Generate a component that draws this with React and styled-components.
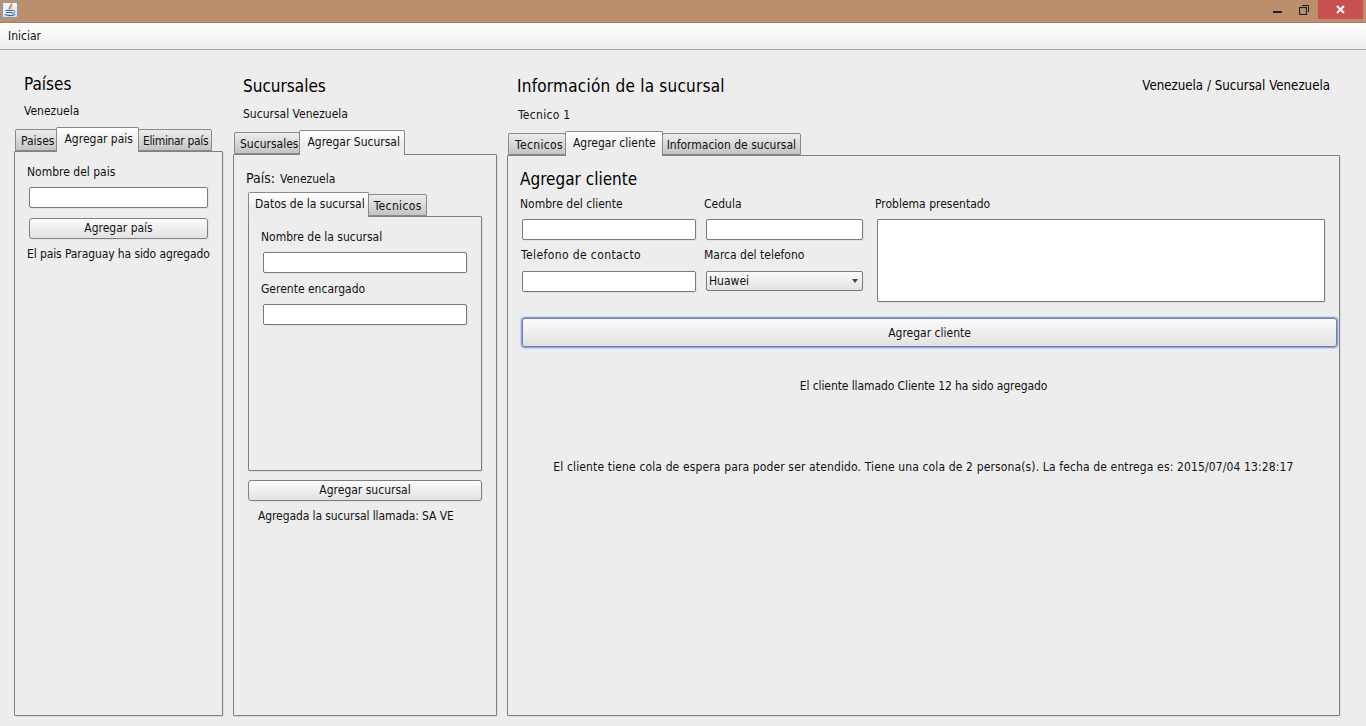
import React from 'react';
import styled, {createGlobalStyle} from 'styled-components';

const Global = createGlobalStyle`
html, body { margin:0; height:100%; background:#ededed; }
body { font-family:"DejaVu Sans Condensed","Noto Sans",sans-serif; font-size:12px; color:#111; }
#root { height:100%; }
* { box-sizing:border-box; }
`

const Frame = styled.div`
width:1366px;
height:726px;
display:flex;
flex-direction:column;
overflow:hidden;
background:#ededed;
`

const TitleBar = styled.div`
height:23px;
flex:none;
display:flex;
align-items:flex-start;
justify-content:space-between;
background:#bb8f6e;
border-bottom:1px solid #a37c60;
padding-left:2px;
`

const AppIcon = styled.div`
width:16px;
height:16px;
margin-top:2px;
border:1px solid #7f9fc4;
border-radius:2px;
background:linear-gradient(#f8fafc,#d3deea);
display:flex;
`

const WinButtons = styled.div`
display:flex;
align-items:flex-start;
margin-right:3px;
`

const WinButton = styled.div`
width:${p => p.$w}px;
height:19px;
display:flex;
align-items:center;
justify-content:center;
background:${p => p.$close ? '#c75050' : 'transparent'};
`

const MinIcon = styled.svg`
margin-top:5px;
`

const MenuBar = styled.div`
height:27px;
flex:none;
display:flex;
align-items:center;
padding:0 0 1px 8px;
background:linear-gradient(#ffffff,#eeeeee);
border-bottom:1px solid #a8a8a8;
`

const Main = styled.div`
flex:1;
display:flex;
gap:10px;
padding:0 0 10px 14px;
min-height:0;
`

const Column = styled.section`
width:${p => p.$w}px;
flex:none;
display:flex;
flex-direction:column;
padding-top:${p => p.$top}px;
`

const HeadRow = styled.div`
display:flex;
justify-content:space-between;
align-items:center;
padding:0 10px;
`

const Heading = styled.h2`
margin:0;
font-size:17px;
font-weight:400;
line-height:20px;
letter-spacing:${p => p.$track || 0}px;
color:#000;
`

const Location = styled.div`
font-size:13.2px;
line-height:20px;
color:#000;
`

const Sub = styled.div`
line-height:16px;
margin-top:${p => p.$gap}px;
padding-left:${p => p.$left}px;
letter-spacing:${p => p.$track || 0}px;
`

const TabStrip = styled.div`
display:flex;
align-items:flex-end;
height:24px;
margin-top:${p => p.$gap || 0}px;
padding-left:1px;
position:relative;
z-index:1;
`

const Tab = styled.div`
height:${p => p.$active ? 25 : 22}px;
line-height:${p => p.$active ? 23 : 22}px;
padding:0 ${p => p.$r}px 0 ${p => p.$l}px;
letter-spacing:${p => p.$track || 0}px;
margin:0 ${p => p.$active ? -1 : 0}px ${p => p.$active ? -1 : 0}px;
border:1px solid #8a8a8a;
border-bottom:${p => p.$active ? 'none' : '1px solid #8a8a8a'};
border-radius:2px 2px 0 0;
white-space:nowrap;
background:${p => p.$active ? 'linear-gradient(#ffffff,#ededed 60%)' : 'linear-gradient(#ededed,#c4c4c4)'};
position:relative;
z-index:${p => p.$active ? 2 : 1};
`

const Panel = styled.div`
flex:${p => p.$h ? 'none' : 1};
height:${p => p.$h ? `${p.$h}px` : 'auto'};
display:flex;
flex-direction:column;
padding:${p => p.$pad};
border:1px solid #808080;
border-radius:1px;
box-shadow:1px 1px 0 #dcdcdc;
`

const Label = styled.label`
display:block;
line-height:16px;
margin-top:${p => p.$gap || 0}px;
`

const Input = styled.input`
display:block;
width:${p => p.$w}px;
height:21px;
margin-top:${p => p.$gap || 0}px;
margin-left:${p => p.$left || 0}px;
background:#fff;
border:1px solid #7a7a7a;
border-radius:2px;
outline:none;
box-shadow:1px 1px 0 #e2e2e2;
`

const Button = styled.button`
display:block;
width:${p => p.$w}px;
height:${p => p.$h || 21}px;
margin-top:${p => p.$gap || 0}px;
margin-left:${p => p.$left || 0}px;
padding:0 0 ${p => p.$focus ? 0 : 1}px;
font:inherit;
color:#111;
background:linear-gradient(#fbfbfb,#e2e2e2);
border:1px solid ${p => p.$focus ? '#7b7f88' : '#808080'};
border-radius:3px;
box-shadow:${p => p.$focus ? '0 0 0 1px #7ea6f0, 0 0 0 2px rgba(150,185,245,.45)' : '1px 1px 0 #e2e2e2'};
`

const Message = styled.div`
line-height:16px;
white-space:nowrap;
margin-top:${p => p.$gap}px;
padding-left:${p => p.$left || 0}px;
letter-spacing:-0.1px;
`

const CenterMessage = styled.div`
line-height:16px;
margin-top:${p => p.$gap}px;
text-align:center;
letter-spacing:${p => p.$track}px;
`

const PaisRow = styled.div`
display:flex;
align-items:baseline;
gap:5px;
line-height:18px;
margin-left:-2px;
`

const PaisLabel = styled.span`
font-size:14px;
`

const SubTitle = styled.h3`
margin:0;
font-size:17px;
font-weight:400;
line-height:20px;
color:#000;
`

const FormGrid = styled.div`
display:grid;
grid-template-columns:184px 171px 1fr;
grid-template-rows:23px 28px 24px 21px;
margin-top:7px;
`

const FieldLabel = styled.label`
line-height:16px;
padding-left:${p => p.$left || 0}px;
letter-spacing:${p => p.$track || 0}px;
`

const FieldBox = styled.div`
padding-left:2px;
`

const Problem = styled.textarea`
grid-column:3;
grid-row:2 / span 3;
width:448px;
height:83px;
margin:0 0 0 2px;
background:#fff;
border:1px solid #7a7a7a;
border-radius:1px;
outline:none;
resize:none;
box-shadow:1px 1px 0 #e2e2e2;
`

const Select = styled.div`
width:157px;
height:20px;
display:flex;
align-items:center;
justify-content:space-between;
padding:0 4px 0 2px;
background:linear-gradient(#fbfbfb,#e2e2e2);
border:1px solid #7a7a7a;
border-radius:2px;
`

const Caret = styled.span`
width:0;
height:0;
border-left:3.5px solid transparent;
border-right:3.5px solid transparent;
border-top:4px solid #444;
`

const JavaIcon = () => (
  <svg width="14" height="14" viewBox="0 0 14 14" fill="none">
    <path d="M8.5 0.5 C9.5 2.5 5.5 3.5 6.5 6.5" stroke="#e8701f" strokeWidth="1.6"/>
    <path d="M10 3 C8.5 4 8.5 5 9 6.5" stroke="#ef9a55" strokeWidth="1"/>
    <path d="M2.5 7.5 H9.5 M3 9.5 H9 M2 11.5 C5 12.8 9 12.8 12 11.5" stroke="#2f6597" strokeWidth="1.1"/>
    <path d="M9.5 7.5 C12.5 7 12.5 10 9 10.2" stroke="#2f6597" strokeWidth="0.9"/>
  </svg>
)

const App = () => (
  <Frame>
    <Global/>
    <TitleBar>
      <AppIcon><JavaIcon/></AppIcon>
      <WinButtons>
        <WinButton $w={25}>
          <MinIcon width="9" height="2" viewBox="0 0 9 2"><rect width="9" height="2" fill="#222"/></MinIcon>
        </WinButton>
        <WinButton $w={28}>
          <svg width="11" height="11" viewBox="0 0 11 11" fill="none" stroke="#222">
            <rect x="0.5" y="3.5" width="7" height="7" strokeWidth="1.2"/>
            <path d="M3 1.5 H9.5 V8" strokeWidth="1"/>
          </svg>
        </WinButton>
        <WinButton $w={45} $close>
          <svg width="9" height="9" viewBox="0 0 9 9" stroke="#fff" strokeWidth="2"><path d="M1 1 L8 8 M8 1 L1 8"/></svg>
        </WinButton>
      </WinButtons>
    </TitleBar>
    <MenuBar>Iniciar</MenuBar>
    <Main>
      <Column $w={209} $top={24}>
        <HeadRow><Heading>Países</Heading></HeadRow>
        <Sub $gap={9} $left={10}>Venezuela</Sub>
        <TabStrip $gap={8}>
          <Tab $l={5} $r={2}>Paises</Tab>
          <Tab $active $l={7} $r={5}>Agregar pais</Tab>
          <Tab $l={4} $r={3} $track={-0.35}>Eliminar país</Tab>
        </TabStrip>
        <Panel $pad="12px 12px">
          <Label>Nombre del pais</Label>
          <Input $w={179} $left={2} $gap={7}/>
          <Button $w={179} $left={2} $gap={10}>Agregar país</Button>
          <Message $gap={7}>El pais Paraguay ha sido agregado</Message>
        </Panel>
      </Column>

      <Column $w={264} $top={26}>
        <HeadRow><Heading>Sucursales</Heading></HeadRow>
        <Sub $gap={10} $left={10}>Sucursal Venezuela</Sub>
        <TabStrip $gap={8}>
          <Tab $l={5} $r={1}>Sucursales</Tab>
          <Tab $active $l={7} $r={4}>Agregar Sucursal</Tab>
        </TabStrip>
        <Panel $pad="14px 14px">
          <PaisRow><PaisLabel>País:</PaisLabel> Venezuela</PaisRow>
          <TabStrip $gap={4}>
            <Tab $active $l={6} $r={3}>Datos de la sucursal</Tab>
            <Tab $l={5} $r={4} $track={0.35}>Tecnicos</Tab>
          </TabStrip>
          <Panel $h={255} $pad="12px 12px">
            <Label>Nombre de la sucursal</Label>
            <Input $w={204} $left={2} $gap={7}/>
            <Label $gap={8}>Gerente encargado</Label>
            <Input $w={204} $left={2} $gap={7}/>
          </Panel>
          <Button $w={234} $gap={9}>Agregar sucursal</Button>
          <Message $gap={7} $left={10}>Agregada la sucursal llamada: SA VE</Message>
        </Panel>
      </Column>

      <Column $w={833} $top={26}>
        <HeadRow>
          <Heading $track={0.23}>Información de la sucursal</Heading>
          <Location>Venezuela / Sucursal Venezuela</Location>
        </HeadRow>
        <Sub $gap={11} $left={11} $track={0.3}>Tecnico 1</Sub>
        <TabStrip $gap={8}>
          <Tab $l={6} $r={2} $track={0.35}>Tecnicos</Tab>
          <Tab $active $l={7} $r={6}>Agregar cliente</Tab>
          <Tab $l={4} $r={4}>Informacion de sucursal</Tab>
        </TabStrip>
        <Panel $pad="13px 12px">
          <SubTitle>Agregar cliente</SubTitle>
          <FormGrid>
            <FieldLabel>Nombre del cliente</FieldLabel>
            <FieldLabel>Cedula</FieldLabel>
            <FieldLabel>Problema presentado</FieldLabel>
            <FieldBox><Input $w={174}/></FieldBox>
            <FieldBox><Input $w={157}/></FieldBox>
            <Problem/>
            <FieldLabel $left={1} $track={0.4}>Telefono de contacto</FieldLabel>
            <FieldLabel>Marca del telefono</FieldLabel>
            <FieldBox><Input $w={174}/></FieldBox>
            <FieldBox><Select>Huawei<Caret/></Select></FieldBox>
          </FormGrid>
          <Button $w={815} $h={29} $left={2} $gap={26} $focus>Agregar cliente</Button>
          <CenterMessage $gap={31} $track={-0.09}>El cliente llamado Cliente 12 ha sido agregado</CenterMessage>
          <CenterMessage $gap={65} $track={0.133}>El cliente tiene cola de espera para poder ser atendido. Tiene una cola de 2 persona(s). La fecha de entrega es: 2015/07/04 13:28:17</CenterMessage>
        </Panel>
      </Column>
    </Main>
  </Frame>
);

export default App;
